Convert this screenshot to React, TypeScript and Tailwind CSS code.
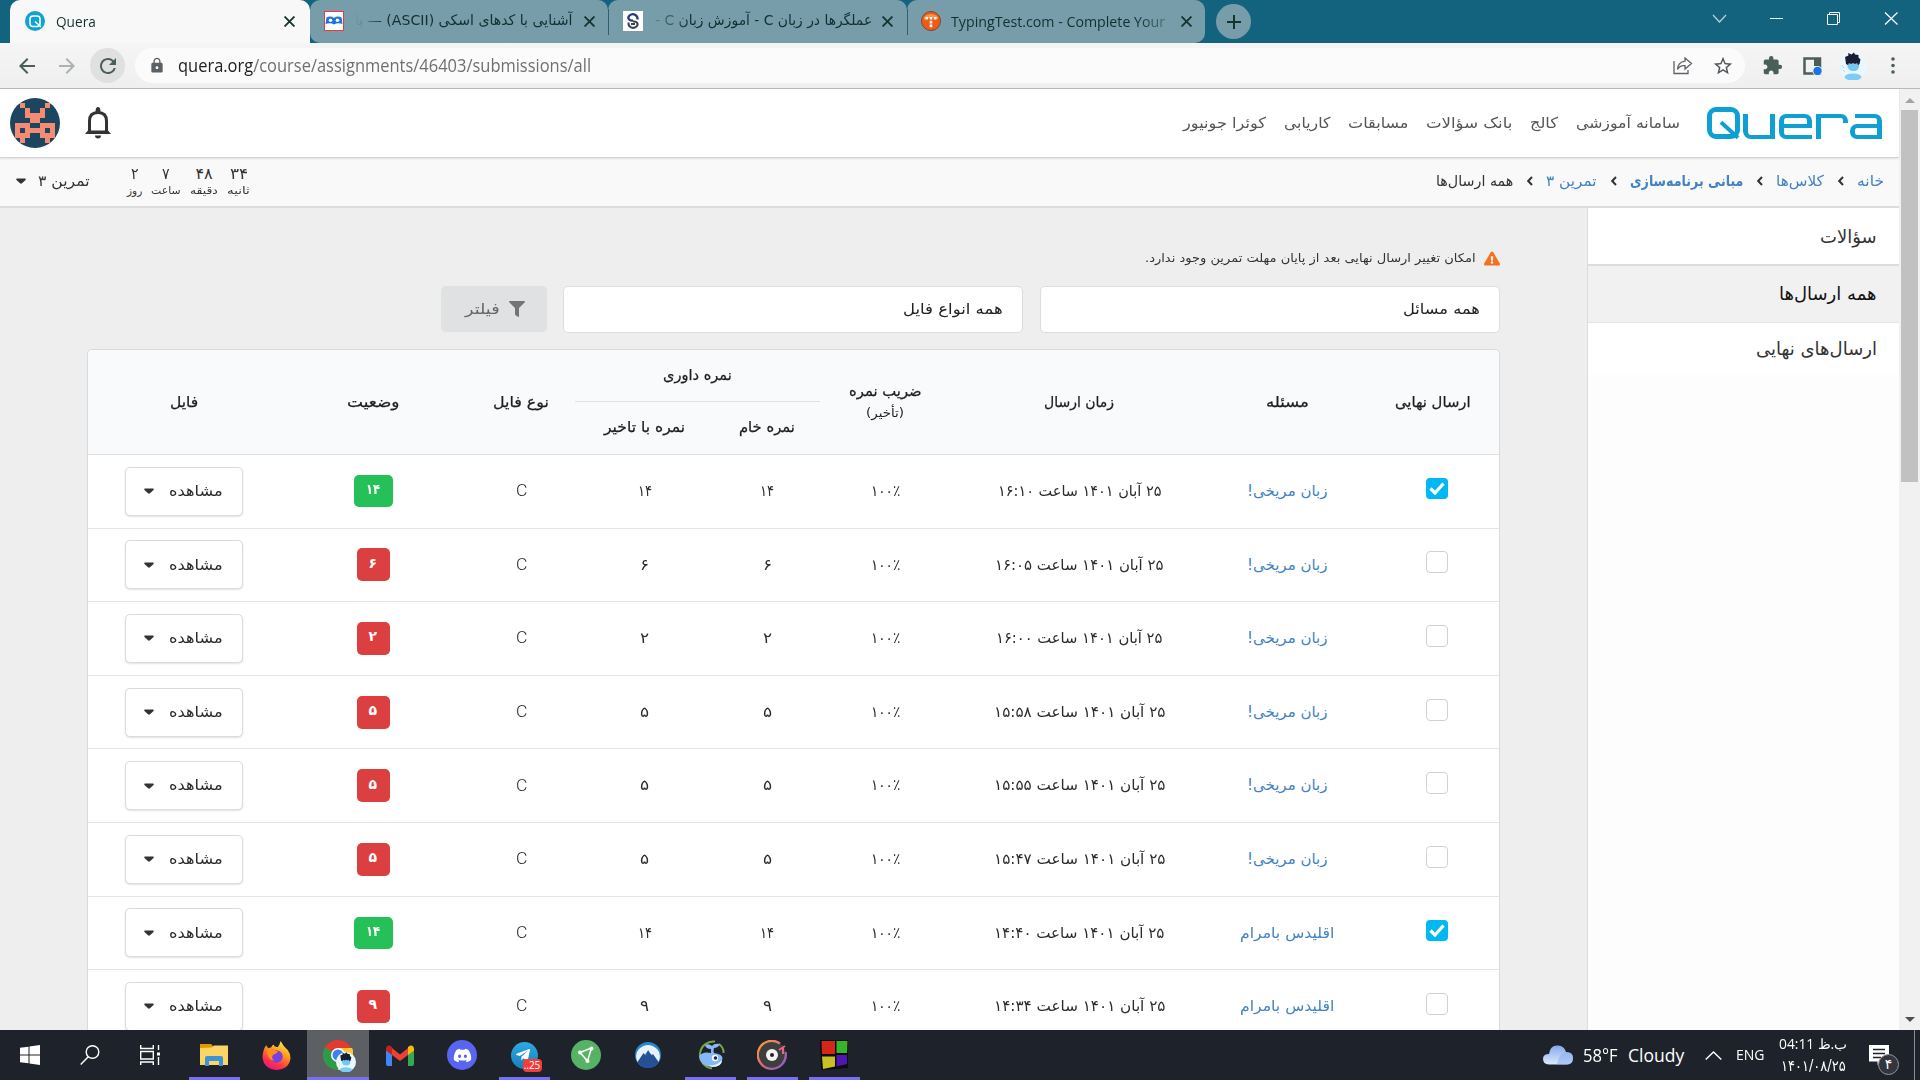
import React, { useLayoutEffect, useRef, useState } from "react";
import { MdArrowBack, MdArrowForward, MdRefresh, MdLock, MdStarBorder, MdExtension } from "react-icons/md";
import { FaDiscord, FaTelegramPlane, FaFilter, FaExclamationTriangle } from "react-icons/fa";

/** Text condensed or widened horizontally to fill the width of its box. */
function Fit({ className = "", rtl = true, children }: { className?: string; rtl?: boolean; children: React.ReactNode }) {
  const box = useRef<HTMLSpanElement>(null);
  const inner = useRef<HTMLSpanElement>(null);
  const [scale, setScale] = useState(1);
  useLayoutEffect(() => {
    if (box.current && inner.current) setScale(box.current.clientWidth / inner.current.offsetWidth);
  }, []);
  return (
    <span ref={box} dir="ltr" className={"flex shrink-0 whitespace-nowrap " + className}>
      <span ref={inner} dir={rtl ? "rtl" : "ltr"} className="inline-block shrink-0 origin-left" style={{ transform: `scaleX(${scale})` }}>
        {children}
      </span>
    </span>
  );
}

function CloseX({ className = "" }: { className?: string }) {
  return (
    <svg viewBox="0 0 10 10" className={"h-[11px] w-[11px] shrink-0 " + className} stroke="#17352f" strokeWidth="1.7">
      <path d="M.5 .5 9.5 9.5M9.5 .5 .5 9.5" />
    </svg>
  );
}

function TabStrip() {
  return (
    <div className="flex h-[43px] bg-[#14637e] pl-[10px] font-[Open_Sans,Noto_Sans,sans-serif] text-[15px] text-[#12302f]">
      <div className="relative flex w-[300px] items-center rounded-t-[10px] bg-[#f8f8f8] pr-[15px] pb-[1px] pl-[15px]">
        <svg viewBox="0 0 20 20" className="h-5 w-5" fill="none">
          <circle cx="10" cy="10" r="10" fill="#0ea2d5" />
          <rect x="5" y="5" width="10" height="10.5" rx="3" stroke="#fff" strokeWidth="1.6" />
          <path d="M10 10.5 16 16" stroke="#fff" strokeWidth="1.4" />
        </svg>
        <Fit rtl={false} className="ml-[11px] w-[40px]">Quera</Fit>
        <CloseX className="ml-auto" />
      </div>
      <div className="flex w-[298px] items-center rounded-t-[10px] rounded-bl-[10px] bg-[#779dab] pb-[1px] pl-[14px]">
        <svg viewBox="0 0 20 20" className="h-5 w-5">
          <rect x=".5" y=".5" width="19" height="19" fill="#fff" stroke="#f03a3a" />
          <path d="M2.5 6.5Q6.500 4.500 10 7Q13.500 4.500 17.500 6.500L18.500 13Q13.500 11.500 10 13.500Q6.500 11.500 1.500 13Z" fill="#1873e0" />
          <circle cx="6.500" cy="9.300" r="1.800" fill="#fff" /><circle cx="13.500" cy="9.300" r="1.800" fill="#fff" />
        </svg>
        <Fit className="ml-[11px] w-[218px] font-[DejaVu_Sans,sans-serif] text-[14.500px] [mask-image:linear-gradient(to_right,transparent,#000_30px)]">آشنایی با کدهای اسکی (ASCII) — با</Fit>
        <CloseX className="ml-[11px]" />
      </div>
      <div className="flex w-[299px] items-center rounded-t-[10px] bg-[#779dab] bg-[linear-gradient(#305f70,#305f70)] bg-[length:1px_26px] bg-[position:0_9px] bg-no-repeat pb-[1px] pl-[15px]">
        <svg viewBox="0 0 20 20" className="h-5 w-5" fill="none">
          <rect width="20" height="20" fill="#fff" />
          <path d="M14.500 8.500C15 4 10 1.500 6.500 4.500C4 7 6 10 10 9.500" stroke="#243c78" strokeWidth="2.300" />
          <path d="M5.500 11.500C5 16 10 18.500 13.500 15.500C16 13 14 10 10 10.500M8 13l4 0" stroke="#3d4250" strokeWidth="2" />
        </svg>
        <Fit className="ml-[12px] w-[217px] font-[DejaVu_Sans,sans-serif] text-[14.500px] [mask-image:linear-gradient(to_right,#0004,#000_35px)]">عملگرها در زبان C - آموزش زبان C -</Fit>
        <CloseX className="ml-[10px]" />
      </div>
      <div className="flex w-[298px] items-center rounded-t-[10px] rounded-br-[10px] bg-[#779dab] bg-[linear-gradient(#305f70,#305f70)] bg-[length:1px_26px] bg-[position:0_9px] bg-no-repeat pb-[1px] pl-[14px]">
        <svg viewBox="0 0 20 20" className="h-5 w-5">
          <circle cx="10" cy="10" r="9.500" fill="#ef5b17" stroke="#7d4a34" />
          <path d="M3 6Q10 0 17 6V8Q10 5 3 9Z" fill="#f9944c" />
          <path d="M4.500 6h2.600v2.600H4.500zM8.700 6h2.600v2.600H8.700zM12.900 6h2.600v2.600h-2.600zM8.700 9.800h2.600v2.600H8.700zM8.700 13.600h2.600v2.600H8.700z" fill="#fff" />
        </svg>
        <Fit rtl={false} className="ml-[10px] w-[214px] [mask-image:linear-gradient(to_left,#0006,#000_28px)]">TypingTest.com - Complete Your</Fit>
        <CloseX className="ml-[16px]" />
      </div>
      <div className="mt-1 ml-[11px] flex h-[35px] w-[35px] items-center justify-center rounded-full bg-[#779dab]">
        <svg viewBox="0 0 14 14" className="h-[14px] w-[14px]" stroke="#17352f" strokeWidth="2"><path d="M7 0V14M0 7H14" /></svg>
      </div>
      <svg viewBox="0 0 190 20" className="mt-[8px] ml-auto h-5 w-[190px]" fill="none" stroke="#fff" strokeWidth="1">
        <path d="M3 7 9.500 14 16 7" stroke="#b9d2db" strokeWidth="1.200" />
        <path d="M60 10.500H73" />
        <path d="M117.500 6.500h10v10h-10zM119.500 6V4.500h10v10H128" />
        <path d="M175 4.500 187.500 16.500M187.500 4.500 175 16.500" strokeWidth="1.200" />
      </svg>
      <div className="w-[20px]" />
    </div>
  );
}

function Face({ className = "" }: { className?: string }) {
  return (
    <svg viewBox="0 0 28 28" className={className}>
      <circle cx="14" cy="14" r="14" fill="#eaf8fe" />
      <ellipse cx="14" cy="25" rx="8.500" ry="3.500" fill="#7bcdf7" />
      <path d="M8.500 10h11.500v4q0 5-5.500 5T8.500 14z" fill="#6fc8f6" />
      <path d="M6 5 9.500 3.500 9 1l3.500 1.500L15 .5l1 2 3.500.5 0 2.500 2 2-1 4.500-1.500 1-1-2-2 1-2-1-2 1-2-1-1 2-2-1-.500-4z" fill="#1b1d33" />
      <path d="M3 13l2 3M4 18l2 2" stroke="#a6e3ea" />
    </svg>
  );
}

function Toolbar() {
  return (
    <div className="flex h-[46px] items-center border-b border-[#b9b9b9] bg-gradient-to-b from-[#f5f5f5] to-[#efefef] pl-[15px] text-[#4b5f5a]">
      <MdArrowBack className="h-6 w-6" />
      <MdArrowForward className="ml-4 h-6 w-6 text-[#acb2b0]" />
      <div className="ml-[11px] flex h-[35px] w-[35px] items-center justify-center rounded-full bg-[#e0e0e0]"><MdRefresh className="h-6 w-6" /></div>
      <div className="ml-[10px] flex h-[35px] w-[1610px] items-center rounded-full bg-[#fbfbfb] pl-[13px]">
        <MdLock className="h-[17px] w-[18px] text-[#5b6065]" />
        <Fit rtl={false} className="ml-[12px] w-[413px] font-[Open_Sans,Noto_Sans,sans-serif] text-[17.500px] text-[#6d7072]"><span className="text-[#202124]">quera.org</span>/course/assignments/46403/submissions/all</Fit>
        <svg viewBox="0 0 20 18" className="ml-auto h-[18px] w-5" fill="none" stroke="#5f6368" strokeWidth="1.300">
          <path d="M1 4V16.500H15V13" /><path d="M12 1 18.500 6.500 12 12V8.700Q7 8 4.500 12.500Q5 5 12 4.200Z" />
        </svg>
        <MdStarBorder className="mr-[11px] ml-[19px] h-[22px] w-[22px] text-[#50555a]" />
      </div>
      <MdExtension className="ml-[17px] h-[21px] w-[21px]" />
      <svg viewBox="0 0 19 18" className="ml-[20px] h-[18px] w-[19px]" fill="none"><path d="M1.500 1.500H17V16.500H1.500z" stroke="#4b5f5a" strokeWidth="2.500" /><path d="M11 1H18V9H11z" fill="#4b5f5a" /><circle cx="14.500" cy="14" r="5" fill="#f0f0f0" /><circle cx="14.500" cy="14" r="4.200" fill="#1a73e8" /></svg>
      <Face className="ml-[17px] h-[28px] w-[28px]" />
      <svg viewBox="0 0 4 18" className="ml-[24px] h-[17px] w-[4px]" fill="#4b5f5a"><circle cx="2" cy="2.200" r="1.900" /><circle cx="2" cy="9" r="1.900" /><circle cx="2" cy="15.800" r="1.900" /></svg>
    </div>
  );
}

/** Wordmark made of rounded bars. */
function Logo() {
  return (
    <div role="img" aria-label="Quera" className="relative h-[32px] w-[175px] shrink-0">
      <i className="absolute top-0 left-0 h-[32px] w-[33px] rounded-[9px] border-[5px] border-[#0e9fd3]" />
      <i className="absolute top-[21px] left-[11px] h-[4px] w-[23px] rotate-[42deg] bg-[#0e9fd3]" />
      <i className="absolute top-[7px] left-[36px] h-[25px] w-[32px] rounded-bl-[8px] border-x-[5px] border-b-[4px] border-[#0e9fd3]" />
      <i className="absolute top-[7px] left-[72px] h-[14px] w-[33px] rounded-t-[7px] border-x-[5px] border-y-[4px] border-[#0e9fd3]" />
      <i className="absolute top-[17px] left-[72px] h-[15px] w-[33px] rounded-bl-[7px] border-b-[4px] border-l-[5px] border-[#0e9fd3]" />
      <i className="absolute top-[7px] left-[109px] h-[25px] w-[5px] bg-[#0e9fd3]" />
      <i className="absolute top-[7px] left-[109px] h-[9px] w-[32px] rounded-tr-[7px] border-t-[4px] border-r-[5px] border-[#0e9fd3]" />
      <i className="absolute top-[7px] left-[148px] h-[25px] w-[27px] rounded-tr-[7px] border-t-[4px] border-r-[5px] border-[#0e9fd3]" />
      <i className="absolute top-[17px] left-[143px] h-[15px] w-[32px] rounded-l-[7px] border-x-[5px] border-y-[4px] border-[#0e9fd3]" />
    </div>
  );
}

const avatarRows = ["01000010", "00100100", "00111100", "00011000", "11100111", "10111101", "11100111", "01000010"];

function SiteHeader() {
  return (
    <header className="relative z-10 flex h-[69px] shrink-0 items-center border-b border-[#d4d4d4] bg-white pr-[17px] pl-[10px] text-[15px] text-[#555] shadow-[0_1px_2px_rgba(0,0,0,0.1)]" dir="rtl">
      <Logo />
      <nav className="mr-[27px] flex gap-[18px]">
        <Fit className="w-[104px]">سامانه آموزشی</Fit>
        <Fit className="w-[28px]">کالج</Fit>
        <Fit className="w-[86px]">بانک سؤالات</Fit>
        <Fit className="w-[60px]">مسابقات</Fit>
        <Fit className="w-[46px]">کاریابی</Fit>
        <Fit className="w-[83px]">کوئرا جونیور</Fit>
      </nav>
      <svg viewBox="0 0 26 32" className="mr-auto h-[32px] w-[26px]" fill="none">
        <path d="M4.500 26V14Q4.500 5.500 13 5.500T21.500 14V26" stroke="#333" strokeWidth="3" />
        <path d="M0 27 3 23.500H23L26 27ZM10.500 5Q10.500 0 13 0T15.500 5ZM10 28.500H16Q16 31.500 13 31.500T10 28.500Z" fill="#333" />
      </svg>
      <div className="mr-[25px] flex h-[50px] w-[50px] items-center justify-center rounded-full bg-[#1c455f]" dir="ltr">
        <svg viewBox="0 0 8 8" className="h-[40px] w-[40px]" fill="#f58b70" shapeRendering="crispEdges">
          {avatarRows.flatMap((r, y) => [...r].map((c, x) => (c === "1" ? <rect key={`${x}-${y}`} x={x} y={y} width="1" height="1" /> : null)))}
        </svg>
      </div>
    </header>
  );
}

function Chevron() {
  return <svg viewBox="0 0 6 10" className="mx-[13.500px] h-[10px] w-[6px]" fill="none" stroke="#333" strokeWidth="2"><path d="M5 1 1.200 5 5 9" /></svg>;
}

function Caret({ className = "" }: { className?: string }) {
  return <svg viewBox="0 0 10 6" className={"h-[6px] w-[10px] " + className} fill="#333"><path d="M1 .5H9Q10.300 1 9.500 2L6 5.300Q5 6 4 5.300L.5 2Q-.3 1 1 .5Z" /></svg>;
}

const countdown = [
  { n: "۳۴", l: "ثانیه", nw: "w-[18px]", lw: "w-[23px]" },
  { n: "۴۸", l: "دقیقه", nw: "w-[17px]", lw: "w-[28px]" },
  { n: "۷", l: "ساعت", nw: "w-[8px]", lw: "w-[30px]" },
  { n: "۲", l: "روز", nw: "w-[8px]", lw: "w-[15px]" },
];

function Breadcrumbs() {
  return (
    <div className="flex h-[50px] shrink-0 items-center border-b-2 border-[#dcdcdc] bg-[#f9f9f9] pr-[15px] pb-[2px] pl-[16px] text-[15px] text-[#333]" dir="rtl">
      <Fit className="w-[27px] text-[#4183c4]">خانه</Fit>
      <Chevron />
      <Fit className="w-[48px] text-[#4183c4]">کلاس‌ها</Fit>
      <Chevron />
      <Fit className="w-[113px] font-bold text-[#4183c4]">مبانی برنامه‌سازی</Fit>
      <Chevron />
      <Fit className="w-[51px] text-[#4183c4]">تمرین ۳</Fit>
      <Chevron />
      <Fit className="w-[77px]">همه ارسال‌ها</Fit>
      <div className="mr-auto flex gap-[9px]">
        {countdown.map((c) => (
          <div key={c.l} className="flex flex-col items-center">
            <Fit className={"text-[16px] leading-[18px] " + c.nw}>{c.n}</Fit>
            <Fit className={"text-[10.500px] leading-[15px] " + c.lw}>{c.l}</Fit>
          </div>
        ))}
      </div>
      <Fit className="mr-[37px] w-[52px]">تمرین ۳</Fit>
      <Caret className="mr-[12px] w-[9px]" />
    </div>
  );
}

const rows = [
  { final: true, problem: "زبان مریخی!", time: "۱۶:۱۰", tw: "w-[163px]", score: "۱۴" },
  { final: false, problem: "زبان مریخی!", time: "۱۶:۰۵", tw: "w-[168px]", score: "۶" },
  { final: false, problem: "زبان مریخی!", time: "۱۶:۰۰", tw: "w-[166px]", score: "۲" },
  { final: false, problem: "زبان مریخی!", time: "۱۵:۵۸", tw: "w-[171px]", score: "۵" },
  { final: false, problem: "زبان مریخی!", time: "۱۵:۵۵", tw: "w-[171px]", score: "۵" },
  { final: false, problem: "زبان مریخی!", time: "۱۵:۴۷", tw: "w-[171px]", score: "۵" },
  { final: true, problem: "اقلیدس بامرام", time: "۱۴:۴۰", tw: "w-[170px]", score: "۱۴" },
  { final: false, problem: "اقلیدس بامرام", time: "۱۴:۳۴", tw: "w-[171px]", score: "۹" },
];

const columns = "grid grid-cols-[133px_158px_258px_130px_106px_139px_108px_188px_191px]";

function TableHead() {
  return (
    <div className={columns + " h-[105px] shrink-0 items-center justify-items-center rounded-t-[5px] border-b border-[#dfe0e1] bg-[#f9fafb] text-[15px] text-[#1d1d1d] [-webkit-text-stroke:0.25px]"}>
      <Fit className="w-[76px]">ارسال نهایی</Fit>
      <Fit className="w-[43px]">مسئله</Fit>
      <Fit className="w-[70px]">زمان ارسال</Fit>
      <div className="flex flex-col items-center">
        <Fit className="w-[73px] leading-[22px]">ضریب نمره</Fit>
        <Fit className="w-[38px] text-[12px] leading-[22px] [-webkit-text-stroke:0]">(تأخیر)</Fit>
      </div>
      <div className="col-span-2 grid w-full grid-cols-[106px_139px] justify-items-center">
        <div className="col-span-2 flex h-[51px] w-full items-center justify-center border-b border-[#dfe1e3]"><Fit className="w-[69px]">نمره داوری</Fit></div>
        <div className="flex h-[52px] items-center"><Fit className="w-[56px]">نمره خام</Fit></div>
        <div className="flex h-[52px] items-center"><Fit className="w-[81px]">نمره با تاخیر</Fit></div>
      </div>
      <Fit className="w-[56px]">نوع فایل</Fit>
      <Fit className="w-[52px]">وضعیت</Fit>
      <Fit className="w-[28px]">فایل</Fit>
    </div>
  );
}

function Row({ row }: { row: (typeof rows)[number] }) {
  const wide = row.score.length > 1;
  const digitWidth = wide ? "w-[14px]" : "w-[9px]";
  return (
    <div className={columns + " h-[73.600px] shrink-0 items-center justify-items-center border-b border-[#e4e5e6] text-[15px] text-[#2b2b2b]"}>
      {row.final ? (
        <div className="mb-[5px] ml-[9px] flex h-[21px] w-[22px] items-center justify-center rounded-[4px] bg-[#00b9f2]">
          <svg viewBox="0 0 16 13" className="h-[13px] w-[16px]" fill="none" stroke="#fff" strokeWidth="3.200"><path d="M1.500 6.500 6 11 14.500 1.500" /></svg>
        </div>
      ) : (
        <div className="mb-[5px] ml-[9px] h-[22px] w-[22px] rounded-[4px] border border-[#d0d1d2] bg-white" />
      )}
      <Fit className={"text-[#4183c4] " + (row.problem.startsWith("ز") ? "w-[80px]" : "w-[94px]")}>{row.problem}</Fit>
      <Fit className={row.tw}>۲۵ آبان ۱۴۰۱ ساعت {row.time}</Fit>
      <Fit className="w-[29px]">۱۰۰٪</Fit>
      <Fit className={digitWidth}>{row.score}</Fit>
      <Fit className={digitWidth}>{row.score}</Fit>
      <Fit rtl={false} className="w-[11px] font-[Roboto,sans-serif] text-[16px] font-light">C</Fit>
      <div className={"flex items-center justify-center rounded-[5px] pb-[3px] text-[14px] font-bold text-white " + (wide ? "h-[32px] w-[39px] bg-[#25c158]" : "h-[33px] w-[33px] bg-[#dc3f40]")}>
        <Fit className={wide ? "w-[14px]" : "w-[9px]"}>{row.score}</Fit>
      </div>
      <div className="flex h-[49px] w-[118px] items-center rounded-[5px] border border-[#dadbdc] bg-white pr-[19px] shadow-[0_1px_2px_rgba(0,0,0,0.12)]">
        <Fit className="w-[54px]">مشاهده</Fit>
        <Caret className="mr-[15px]" />
      </div>
    </div>
  );
}

function Content() {
  return (
    <main className="flex w-[1587px] flex-col bg-[#eeeeee] pr-[87px] pl-[87px]">
      <div className="mt-[40px] flex h-[20px] shrink-0 items-center gap-[8px] text-[12px] text-[#333]">
        <FaExclamationTriangle className="h-[15px] w-[16px] text-[#f2711c]" />
        <Fit className="w-[331px]">امکان تغییر ارسال نهایی بعد از پایان مهلت تمرین وجود ندارد.</Fit>
      </div>
      <div className="mt-[18px] flex h-[47px] shrink-0 items-start text-[15px] text-[#222]">
        <div className="flex h-[47px] w-[460px] items-center rounded-[5px] border border-[#dcdddd] bg-white pr-[19px]"><Fit className="w-[77px]">همه مسائل</Fit></div>
        <div className="mr-[17px] flex h-[47px] w-[460px] items-center rounded-[5px] border border-[#dcdddd] bg-white pr-[19px]"><Fit className="w-[100px]">همه انواع فایل</Fit></div>
        <div className="mr-[16px] flex h-[46px] w-[106px] items-center gap-[10px] rounded-[5px] bg-[#e0e1e2] pr-[22px] text-[#666]">
          <FaFilter className="h-[16px] w-[16px] text-[#747474]" /><Fit className="w-[34px]">فیلتر</Fit>
        </div>
      </div>
      <section className="mt-[16px] flex w-[1413px] shrink-0 flex-col rounded-[5px] border border-[#d8dadb] bg-white">
        <TableHead />
        {rows.map((r, i) => <Row key={i} row={r} />)}
      </section>
    </main>
  );
}

function Sidebar() {
  return (
    <aside className="flex w-[312px] flex-col border-l border-[#dcdcdc] bg-[#fdfdfd] text-[18px] text-[#333]">
      <div className="flex h-[58px] items-center border-b-2 border-[#dcdcdc] bg-white pr-[22px]"><Fit className="w-[57px]">سؤالات</Fit></div>
      <div className="flex h-[57px] items-center border-b border-[#e4e4e4] bg-[#f1f1f1] pr-[22px] pb-[2px] text-[#111]"><Fit className="w-[98px]">همه ارسال‌ها</Fit></div>
      <div className="flex h-[52px] items-center bg-white pr-[22px] pb-[1px]"><Fit className="w-[121px]">ارسال‌های نهایی</Fit></div>
    </aside>
  );
}

function ScrollBar() {
  return (
    <div className="flex w-[21px] flex-col items-center bg-[#f1f1f1]">
      <svg viewBox="0 0 10 5" className="mt-[9px] h-[5px] w-[10px]" fill="#a3a3a3"><path d="M0 5 5 0 10 5Z" /></svg>
      <div className="mt-[7px] h-[372px] w-[17px] bg-[#c1c1c1]" />
      <svg viewBox="0 0 10 5" className="mt-auto mb-[8px] h-[5px] w-[10px]" fill="#505050"><path d="M0 0 5 5 10 0Z" /></svg>
    </div>
  );
}

function TaskButton({ active = false, running = false, children }: { active?: boolean; running?: boolean; children: React.ReactNode }) {
  return (
    <div className={"flex h-[50px] w-[62px] flex-col items-center " + (active ? "bg-[#5c6065]" : "")}>
      <div className="flex h-[47px] items-center justify-center pt-[3px]">{children}</div>
      {running && <div className={"h-[3px] bg-[#7571f2] " + (active ? "w-full" : "w-[51px]")} />}
    </div>
  );
}

function Taskbar() {
  return (
    <footer className="flex h-[50px] shrink-0 items-center bg-[#1e232b] font-[Open_Sans,Noto_Sans,sans-serif] text-white">
      <svg viewBox="0 0 20 20" className="ml-[20px] h-5 w-5" fill="#fff"><path d="M0 2.800 8.500 1.700V9.500H0zM9.500 1.500 20 0V9.500H9.500zM0 10.500H8.500V18.300L0 17.200zM9.500 10.500H20V20L9.500 18.500z" /></svg>
      <svg viewBox="0 0 20 20" className="ml-[40px] h-5 w-5" fill="none" stroke="#fff" strokeWidth="1.400"><circle cx="12.500" cy="7" r="6.300" /><path d="M8.500 11.500.7 19.500" /></svg>
      <svg viewBox="0 0 20 20" className="ml-[40px] h-5 w-5" fill="none" stroke="#fff" strokeWidth="1.400"><path d="M.7 0V3.500H13.300V0M.7 6.500H13.300V14H.7zM.7 20V17H13.300V20M18.500 0V5M18.500 12V20" /><path d="M18.500 7.500V10.500" strokeWidth="3" /></svg>
      <div className="ml-[23px] flex">
        <TaskButton running>
          <svg viewBox="0 0 28 24" className="h-[24px] w-[28px]"><path d="M0 1H11L13 3V5H0z" fill="#dd9a05" /><path d="M0 5 12 4.500 14 2.500H28V22H0z" fill="#fcd565" /><path d="M5 23V15Q5 13 7 13H21Q23 13 23 15V23H19V18H9V23z" fill="#3e92d6" /></svg>
        </TaskButton>
        <TaskButton>
          <svg viewBox="0 0 28 28" className="h-[29px] w-[29px]"><defs><linearGradient id="fx" x1=".8" y1="0" x2=".3" y2="1"><stop offset="0" stopColor="#fff44f" /><stop offset=".4" stopColor="#ff9a1f" /><stop offset=".75" stopColor="#ff3647" /><stop offset="1" stopColor="#e31587" /></linearGradient></defs><path d="M4 4 6 7 9 6Q11 2 12 5L15 6Q17 4 18 0Q21 6 25 9Q28 13 27.500 17Q26 27.500 14 28Q1 27 .5 15Q1 8 4 4Z" fill="url(#fx)" /><circle cx="14" cy="15" r="6" fill="#7b3fe0" /><path d="M5 7Q9 6 12 9Q14 10 16 9Q14 13 11 13Q8 16 12 19Q4 18 5 7Z" fill="#ff8f1f" /></svg>
        </TaskButton>
        <TaskButton active running>
          <div className="relative h-[30px] w-[30px]">
            <svg viewBox="0 0 30 30" className="h-[30px] w-[30px]"><circle cx="15" cy="15" r="15" fill="#e33b2e" /><path d="M15 15 2 7.500A15 15 0 0 0 15 30z" fill="#2a9d48" /><path d="M15 15V30A15 15 0 0 0 29 8H15z" fill="#fcc934" /><circle cx="15" cy="15" r="7" fill="#fff" /><circle cx="15" cy="15" r="5.500" fill="#3b82f0" /></svg>
            <Face className="absolute top-[12px] left-[13px] h-[20px] w-[20px]" />
          </div>
        </TaskButton>
        <TaskButton>
          <svg viewBox="0 0 28 21" className="h-[21px] w-[28px]"><path d="M0 4V19Q0 21 2 21H6V8z" fill="#4285f4" /><path d="M28 4V19Q28 21 26 21H22V8z" fill="#34a853" /><path d="M6 3 14 9.500 22 3V10L14 16 6 10z" fill="#ea4335" /><path d="M0 3.500Q1-1.500 6 2V10L0 5.500z" fill="#c5221f" /><path d="M28 3.500Q27-1.500 22 2V10L28 5.500z" fill="#fbbc04" /></svg>
        </TaskButton>
        <TaskButton><div className="flex h-[30px] w-[30px] items-center justify-center rounded-full bg-[#5865f2]"><FaDiscord className="h-[19px] w-[19px]" /></div></TaskButton>
        <TaskButton running>
          <div className="relative flex h-[27px] w-[27px] items-center justify-center rounded-full bg-gradient-to-b from-[#2fa9e1] to-[#1480bd]">
            <FaTelegramPlane className="mr-[2px] h-[16px] w-[16px]" />
            <span className="absolute top-[17px] left-[12px] flex h-[13px] w-[19px] items-center justify-center rounded-[4px] bg-[#f23d3a] text-[10px]">..25</span>
          </div>
        </TaskButton>
        <TaskButton><div className="flex h-[30px] w-[30px] items-center justify-center rounded-full bg-[#56b366]"><svg viewBox="0 0 18 18" className="h-[18px] w-[18px]" fill="none" stroke="#fff" strokeWidth="1.500"><path d="M3 6.500 14.500 2 10.500 15z" /><g fill="#fff" stroke="none"><circle cx="3" cy="6.500" r="2" /><circle cx="14.500" cy="2.500" r="2" /><circle cx="10.500" cy="15" r="2" /></g></svg></div></TaskButton>
        <TaskButton><svg viewBox="0 0 26 26" className="h-[26px] w-[26px]"><circle cx="13" cy="13" r="13" fill="#2588cf" /><path d="M2.500 20Q-1 12 4 7Q13-1 22 7Q27 12 23.500 20L17 12 15 14 12.500 9 6 18z" fill="#eaf2f8" /><path d="M2.500 20 8.500 11 11 14 13 8 17 14 18 12 23.500 20Q20 26 13 26T2.500 20Z" fill="#255095" /></svg></TaskButton>
        <TaskButton running><svg viewBox="0 0 30 30" className="h-[30px] w-[30px]" fill="none"><path d="M20 1.500A13.500 13.500 0 1 0 17 28.500M24 4Q29 8 28.500 13" stroke="#76a63c" strokeWidth="2" /><path d="M10 5Q14 3 17 6Q19 3 25 4Q23 8 19 8Q18 11 19 13Q27 14 27.500 18Q27 27 17 27Q5 26 4 16Q8 11 16 13L16 9Q11 9 10 5Z" fill="#86b8f8" /><path d="M13 25Q21 27 27 20 27 27 17 27z" fill="#e9f4ff" /><circle cx="20" cy="18" r="3.200" fill="#fff" /><circle cx="20.500" cy="18" r="1.800" fill="#202b50" /></svg></TaskButton>
        <TaskButton running><svg viewBox="0 0 30 30" className="h-[30px] w-[30px]" fill="none"><defs><linearGradient id="dj" x1="0" y1="0" x2="1" y2="1"><stop offset=".1" stopColor="#ff963d" /><stop offset=".5" stopColor="#e0697b" /><stop offset="1" stopColor="#7c5cd8" /></linearGradient></defs><circle cx="15" cy="15" r="14" fill="#3d3e40" /><path d="M23 3.500A14 14 0 1 0 28.500 12" stroke="url(#dj)" strokeWidth="2.200" /><path d="M22 10 28 6M26 7V14" stroke="#e0697b" strokeWidth="2" /><circle cx="15" cy="15" r="6" fill="#f4f4f4" /><circle cx="15" cy="15" r="2" fill="#222" /></svg></TaskButton>
        <TaskButton running><svg viewBox="0 0 28 30" className="h-[30px] w-[28px]"><path d="M0 0H28V28L1 30z" fill="#0c0d10" /><path d="M1.500 1H15V14H2z" fill="#d3271a" /><path d="M16.500 1H27.500L27 13H16.500z" fill="#37b52a" /><path d="M2 16.500H15V26.500L3 29z" fill="#c8c026" /><path d="M16.500 15H27V24L16.500 26.500z" fill="#4e17b5" /></svg></TaskButton>
      </div>
      <svg viewBox="0 0 30 20" className="ml-[678px] h-[20px] w-[30px]"><defs><linearGradient id="cl" x1="0" y1="0" x2="0" y2="1"><stop offset="0" stopColor="#86a9ea" /><stop offset="1" stopColor="#dbe9fd" /></linearGradient></defs><path d="M6 19.500Q0 19 0 14T6 9Q7 0 15 .5Q21 .5 23 7Q30 7 30 13T24 19.500Z" fill="url(#cl)" /><path d="M14 19.500Q16 8 23 7Q30 7 30 13T24 19.500Z" fill="#8aaff0" opacity=".55" /></svg>
      <Fit rtl={false} className="ml-[10px] w-[35px] text-[17.500px]">58°F</Fit>
      <Fit rtl={false} className="ml-[10px] w-[56px] text-[17.500px]">Cloudy</Fit>
      <svg viewBox="0 0 17 9" className="ml-[21px] h-[9px] w-[17px]" fill="none" stroke="#fff" strokeWidth="1.400"><path d="M.7 8.500 8.500 1 16.300 8.500" /></svg>
      <Fit rtl={false} className="ml-[14px] w-[29px] text-[14.500px]">ENG</Fit>
      <div className="ml-[14px] flex w-[68px] flex-col items-center text-[14px]">
        <Fit className="w-[68px] leading-[22px]">ب.ظ 04:11</Fit>
        <Fit className="w-[65px] font-[DejaVu_Sans,sans-serif] text-[15px] leading-[22px]">۱۴۰۱/۰۸/۲۵</Fit>
      </div>
      <div className="relative ml-[22px] h-[20px] w-[20px]">
        <svg viewBox="0 0 20 20" className="h-5 w-5"><path d="M0 0H20V16.500H12L8.500 20V16.500H0z" fill="#fff" /><path d="M4 4.500H16M4 8.500H16M4 12.500H12" stroke="#1e232b" strokeWidth="1.300" /></svg>
        <span className="absolute top-[9px] left-[9px] flex h-[21px] w-[21px] items-center justify-center rounded-full border border-[#94989c] bg-[#33373d] font-[DejaVu_Sans,sans-serif] text-[14px]">۴</span>
      </div>
      <div className="ml-auto h-full w-[6px] border-l border-[#888b90]" />
    </footer>
  );
}

export default function App() {
  return (
    <div lang="fa" className="flex h-[1080px] w-[1920px] flex-col overflow-hidden font-[DejaVu_Sans,sans-serif]">
      <TabStrip />
      <Toolbar />
      <div className="flex min-h-0 flex-1 overflow-hidden">
        <div className="flex w-[1899px] flex-col">
          <SiteHeader />
          <Breadcrumbs />
          <div className="flex min-h-0 flex-1 overflow-hidden" dir="rtl">
            <Sidebar />
            <Content />
          </div>
        </div>
        <ScrollBar />
      </div>
      <Taskbar />
    </div>
  );
}
